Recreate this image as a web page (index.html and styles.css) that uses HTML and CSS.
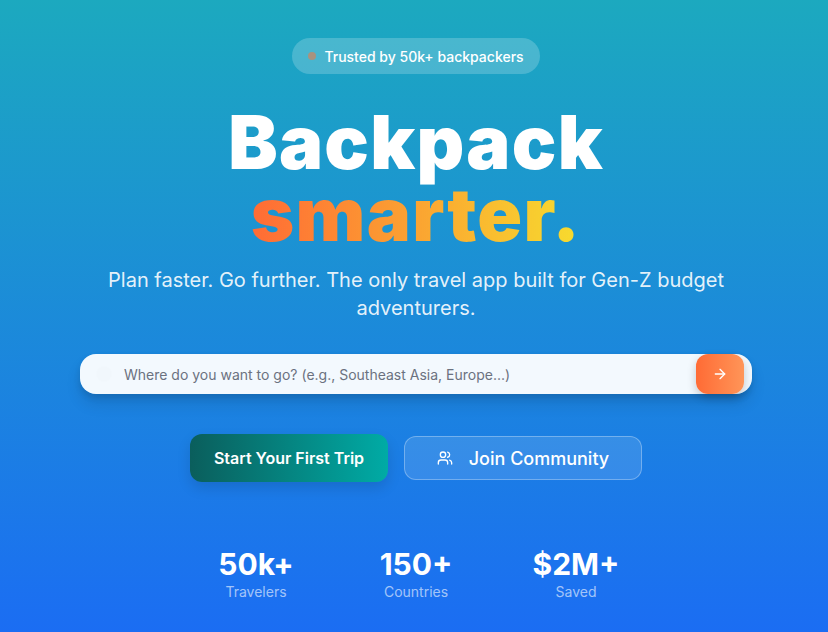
FILE: index.html
```html
<!DOCTYPE html>
<html lang="en">
<head>
  <meta charset="UTF-8">
  <meta name="viewport" content="width=device-width, initial-scale=1.0">
  <title>Backpack smarter</title>
  <link rel="stylesheet" href="styles.css">
</head>
<body>
  <section class="hero">
    <div class="badge"><span class="badge-dot"></span>Trusted by 50k+ backpackers</div>

    <h1 class="title">Backpack<br><span class="title-accent">smarter.</span></h1>

    <p class="subtitle">Plan faster. Go further. The only travel app built for Gen-Z budget adventurers.</p>

    <form class="search">
      <span class="search-icon"></span>
      <input class="search-input" type="text" placeholder="Where do you want to go? (e.g., Southeast Asia, Europe...)">
      <button class="search-btn" type="button" aria-label="Search">
        <svg width="16" height="16" viewBox="0 0 24 24" fill="none" stroke="currentColor" stroke-width="2" stroke-linecap="round" stroke-linejoin="round"><path d="M5 12h14"/><path d="m12 5 7 7-7 7"/></svg>
      </button>
    </form>

    <div class="actions">
      <button class="btn btn-primary" type="button">Start Your First Trip</button>
      <button class="btn btn-ghost" type="button">
        <svg width="16" height="16" viewBox="0 0 24 24" fill="none" stroke="currentColor" stroke-width="2" stroke-linecap="round" stroke-linejoin="round"><path d="M16 21v-2a4 4 0 0 0-4-4H6a4 4 0 0 0-4 4v2"/><circle cx="9" cy="7" r="4"/><path d="M22 21v-2a4 4 0 0 0-3-3.87"/><path d="M16 3.13a4 4 0 0 1 0 7.75"/></svg>
        Join Community
      </button>
    </div>

    <div class="stats">
      <div class="stat"><div class="stat-value">50k+</div><div class="stat-label">Travelers</div></div>
      <div class="stat"><div class="stat-value">150+</div><div class="stat-label">Countries</div></div>
      <div class="stat"><div class="stat-value">$2M+</div><div class="stat-label">Saved</div></div>
    </div>
  </section>
</body>
</html>
```

FILE: styles.css
```css
* {
  box-sizing: border-box;
}
body {
  margin: 0;
  overflow: hidden;
  font-family: 'Inter', sans-serif;
  color: white;
  background: #1b6df3;
}
.hero {
  width: 832px;
  height: 632px;
  padding-top: 38px;
  display: flex;
  flex-direction: column;
  align-items: center;
  background: linear-gradient(180deg, #1ca9bf 0%, #1b6df3 100%);
}
.badge {
  display: flex;
  align-items: center;
  height: 36px;
  padding: 0 16px;
  border-radius: 18px;
  background: rgba(255,255,255,0.2);
  font-size: 14px;
  font-weight: 500;
}
.badge-dot {
  width: 8px;
  height: 8px;
  margin-right: 8px;
  border-radius: 50%;
  background: #a8937f;
}
.title {
  margin: 32px 0 0;
  font-family: 'Inter', sans-serif;
  font-size: 74px;
  font-weight: 900;
  line-height: 72px;
  letter-spacing: 1.3px;
  text-align: center;
}
.title-accent {
  background: linear-gradient(90deg, #ff6b35, #f7dc2e);
  -webkit-background-clip: text;
  background-clip: text;
  color: transparent;
}
.subtitle {
  width: 672px;
  margin: 16px 0 0;
  font-size: 20px;
  line-height: 28px;
  font-weight: 400;
  text-align: center;
  color: rgba(255,255,255,0.9);
}
.search {
  display: flex;
  align-items: center;
  width: 672px;
  height: 40px;
  margin-top: 32px;
  padding: 0 8px 0 16px;
  border-radius: 16px;
  background: rgba(255,255,255,0.95);
  box-shadow: 0 10px 15px rgba(0,0,0,0.1), 0 4px 6px rgba(0,0,0,0.1);
}
.search-icon {
  width: 16px;
  height: 16px;
  margin-right: 12px;
  border-radius: 50%;
  background: rgba(0,0,0,0.006);
}
.search-input {
  flex: 1;
  min-width: 0;
  padding: 0;
  border: none;
  outline: none;
  background: transparent;
  font-family: inherit;
  font-size: 14px;
  color: #374151;
}
.search-input::placeholder {
  color: #6b7280;
}
.search-btn {
  display: flex;
  align-items: center;
  justify-content: center;
  width: 48px;
  height: 40px;
  border: none;
  border-radius: 12px;
  background: linear-gradient(90deg, #ff6b35, #ff9558);
  color: white;
  box-shadow: 0 4px 10px rgba(0,0,0,0.2);
}
.actions {
  display: flex;
  align-items: center;
  gap: 16px;
  margin-top: 40px;
}
.btn {
  display: flex;
  align-items: center;
  justify-content: center;
  border-radius: 12px;
  font-family: inherit;
  font-size: 16px;
  color: white;
}
.btn-primary {
  width: 198px;
  height: 48px;
  border: none;
  font-weight: 600;
  background: linear-gradient(90deg, #0a5e5c, #00aba5);
  box-shadow: 0 6px 14px rgba(0,0,0,0.12);
}
.btn-ghost {
  gap: 16px;
  width: 238px;
  height: 44px;
  font-size: 18px;
  font-weight: 500;
  border: 1px solid rgba(255,255,255,0.3);
  background: rgba(255,255,255,0.12);
}
.stats {
  display: grid;
  grid-template-columns: repeat(3, 160px);
  margin-top: 64px;
}
.stat {
  text-align: center;
}
.stat-value {
  font-size: 30px;
  font-weight: 700;
  line-height: 36px;
}
.stat-label {
  font-size: 14px;
  line-height: 20px;
  color: rgba(255,255,255,0.6);
}
```
